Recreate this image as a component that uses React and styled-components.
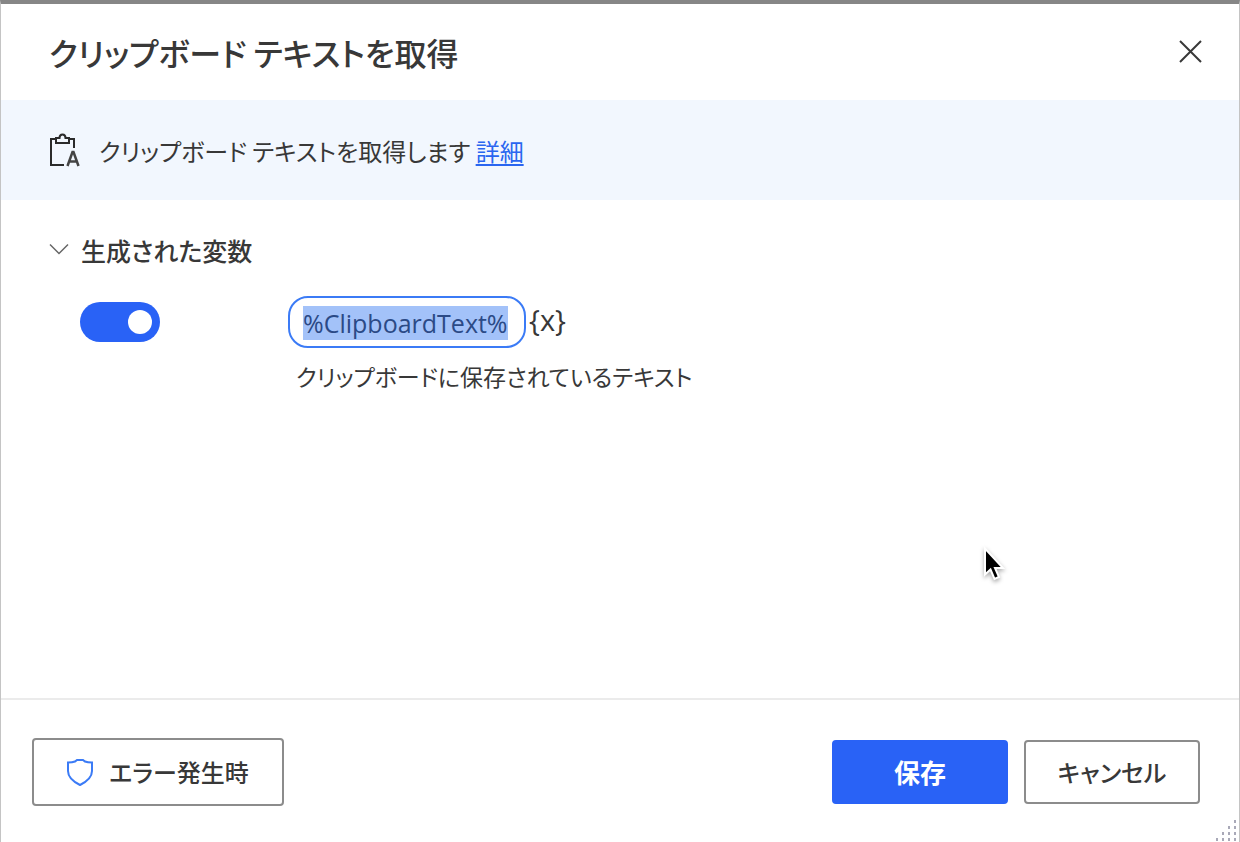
import { useEffect, useRef, useState } from "react";
import styled, { createGlobalStyle } from "styled-components";

const GlobalStyle = createGlobalStyle`
  * {
    box-sizing: border-box;
  }

  body {
    margin: 0;
    background: #fff;
    color: #383838;
    font-family: "Noto Sans CJK JP", sans-serif;
    font-feature-settings: "palt";
    font-size: 24px;
    line-height: 36px;
  }

  button,
  input {
    font: inherit;
    font-feature-settings: inherit;
    color: inherit;
  }
`;

const Dialog = styled.div`
  position: relative;
  display: flex;
  flex-direction: column;
  min-height: 100vh;
  border: 1px solid #c4c4c4;
  border-top: 4px solid #868686;
  border-bottom: none;
`;

const Header = styled.header`
  display: flex;
  align-items: center;
  justify-content: space-between;
  height: 96px;
  padding: 0 32px 0 48px;
`;

const Title = styled.h1`
  margin: 0;
  font-size: 32px;
  font-weight: 500;
  line-height: 48px;
`;

const CloseButton = styled.button`
  display: flex;
  padding: 4px;
  border: none;
  background: none;
`;

const InfoBar = styled.div`
  display: flex;
  align-items: center;
  gap: 18px;
  height: 100px;
  padding: 0 48px;
  background: #f2f7fe;
`;

const Description = styled.p`
  margin: 0;
  padding-top: 2px;
`;

const MoreLink = styled.a`
  color: #2a66f0;
  text-decoration: underline;
  text-underline-offset: 3px;
  text-decoration-thickness: 2px;
`;

const Content = styled.main`
  flex: 1;
  padding: 32px 48px;
`;

const SectionToggle = styled.button`
  display: flex;
  align-items: center;
  gap: 12px;
  padding: 0;
  border: none;
  background: none;
  font-size: 25px;
  font-weight: 500;
`;

const VariableRow = styled.div`
  display: grid;
  grid-template-columns: 80px 1fr;
  column-gap: 128px;
  padding: 28px 0 0 31px;
`;

const Switch = styled.input`
  appearance: none;
  display: flex;
  align-items: center;
  justify-content: ${(props) => (props.checked ? "flex-end" : "flex-start")};
  width: 80px;
  height: 40px;
  margin: 6px 0;
  padding: 8px;
  border-radius: 20px;
  background: ${(props) => (props.checked ? "#2962f6" : "#8a8a8a")};

  &::before {
    content: "";
    width: 24px;
    height: 24px;
    border-radius: 50%;
    background: #fff;
  }
`;

const VariableField = styled.div`
  display: flex;
  align-items: center;
  gap: 3px;
`;

const VariableInput = styled.input`
  width: 238px;
  height: 52px;
  padding: 2px 13px 0;
  border: 2px solid #3b7bf6;
  border-radius: 20px;
  outline: none;
  background: #fff;
  color: #333;
  font-family: "Open Sans", sans-serif;
  font-size: 25px;

  &::selection {
    background: #a3c2f9;
    color: #2b4a86;
  }
`;

const PickerButton = styled.button`
  padding: 0 0 4px;
  border: none;
  background: none;
  font-family: "Open Sans", sans-serif;
  font-size: 29px;
`;

const Hint = styled.label`
  display: block;
  padding: 10px 8px 0;
  font-size: 23px;
`;

const Footer = styled.footer`
  display: flex;
  align-items: center;
  justify-content: space-between;
  padding: 38px 39px 36px 31px;
  border-top: 2px solid #ebebeb;
`;

const Actions = styled.div`
  display: flex;
  gap: 16px;
`;

const Button = styled.button`
  display: flex;
  align-items: center;
  justify-content: center;
  width: 176px;
  height: 64px;
  border: 2px solid ${(props) => (props.$primary ? "#2962f6" : "#8c8c8c")};
  border-radius: 4px;
  background: ${(props) => (props.$primary ? "#2962f6" : "#fff")};
  color: ${(props) => (props.$primary ? "#fff" : "#383838")};
  font-size: ${(props) => (props.$primary ? 26 : 24)}px;
  font-weight: ${(props) => (props.$primary ? 700 : 500)};
`;

const ErrorButton = styled(Button)`
  gap: 16px;
  width: 252px;
  height: 68px;
`;

const ResizeGrip = styled.svg`
  position: absolute;
  right: 2px;
  bottom: 1px;
`;

const Pointer = styled.svg`
  position: absolute;
  top: 540px;
  left: 979px;
  pointer-events: none;
  filter: drop-shadow(0 2px 2px rgba(0, 0, 0, 0.35));
`;

const CloseIcon = () => (
  <svg width="24" height="24" viewBox="0 0 24 24" fill="none" stroke="#383838" strokeWidth="2">
    <path d="M1 1l21 21M22 1L1 22" />
  </svg>
);

const ClipboardIcon = () => (
  <svg width="32" height="36" viewBox="0 0 32 36" fill="none" stroke="#2b2b2b" strokeWidth="2">
    <path d="M15 33H2V7h5M20 7h5v9" />
    <path d="M7 6h3.500c0-2 1-3.500 3-3.500s3 1.500 3 3.500H20v5H7z" />
    <path d="M18.500 34l5-14h1l5 14M20 29.500h8" strokeWidth="2.500" stroke="#444" />
  </svg>
);

const ChevronIcon = () => (
  <svg width="20" height="16" viewBox="0 0 20 16" fill="none" stroke="#666" strokeWidth="1.500">
    <path d="M1 2.500l9 9 9-9" />
  </svg>
);

const ShieldIcon = () => (
  <svg width="26" height="28" viewBox="0 0 26 28" fill="none" stroke="#3b7bf6" strokeWidth="2">
    <path d="M10 2h6l2 1.500c2 .8 4 1 7 1V13c0 6-5 10.500-12 14C6 23.500 1 19 1 13V4.500c3 0 5-.2 7-1z" />
  </svg>
);

const gripDots = [
  [18, 0],
  [12, 6], [18, 6],
  [6, 12], [12, 12], [18, 12],
  [0, 18], [6, 18], [12, 18], [18, 18],
];

const App = () => {
  const [enabled, setEnabled] = useState(true);
  const [open, setOpen] = useState(true);
  const [name, setName] = useState("%ClipboardText%");
  const inputRef = useRef(null);

  useEffect(() => {
    inputRef.current.focus();
    inputRef.current.select();
  }, []);

  return (
    <>
      <GlobalStyle />
      <Dialog role="dialog" aria-labelledby="dialog-title">
        <Header>
          <Title id="dialog-title">クリップボード テキストを取得</Title>
          <CloseButton aria-label="閉じる">
            <CloseIcon />
          </CloseButton>
        </Header>
        <InfoBar>
          <ClipboardIcon />
          <Description>
            クリップボード テキストを取得します <MoreLink href="#">詳細</MoreLink>
          </Description>
        </InfoBar>
        <Content>
          <SectionToggle aria-expanded={open} onClick={() => setOpen(!open)}>
            <ChevronIcon />
            生成された変数
          </SectionToggle>
          {open && (
            <VariableRow>
              <Switch
                type="checkbox"
                role="switch"
                aria-label="生成された変数"
                checked={enabled}
                onChange={(e) => setEnabled(e.target.checked)}
              />
              <div>
                <VariableField>
                  <VariableInput
                    id="variable"
                    ref={inputRef}
                    value={name}
                    spellCheck={false}
                    onChange={(e) => setName(e.target.value)}
                  />
                  <PickerButton>{"{x}"}</PickerButton>
                </VariableField>
                <Hint htmlFor="variable">クリップボードに保存されているテキスト</Hint>
              </div>
            </VariableRow>
          )}
        </Content>
        <Footer>
          <ErrorButton>
            <ShieldIcon />
            エラー発生時
          </ErrorButton>
          <Actions>
            <Button $primary>保存</Button>
            <Button>キャンセル</Button>
          </Actions>
        </Footer>
        <ResizeGrip width="21" height="21" fill="#a9a9b8">
          {gripDots.map(([x, y]) => (
            <rect key={`${x}-${y}`} x={x} y={y} width="2" height="3" />
          ))}
        </ResizeGrip>
        <Pointer width="28" height="40" viewBox="0 0 28 40">
          <path
            d="M5 4.500v26l5.500-5 4 9.500 4.500-2-4-9h8z"
            fill="#000"
            stroke="#fff"
            strokeWidth="2"
          />
        </Pointer>
      </Dialog>
    </>
  );
};

export default App;
